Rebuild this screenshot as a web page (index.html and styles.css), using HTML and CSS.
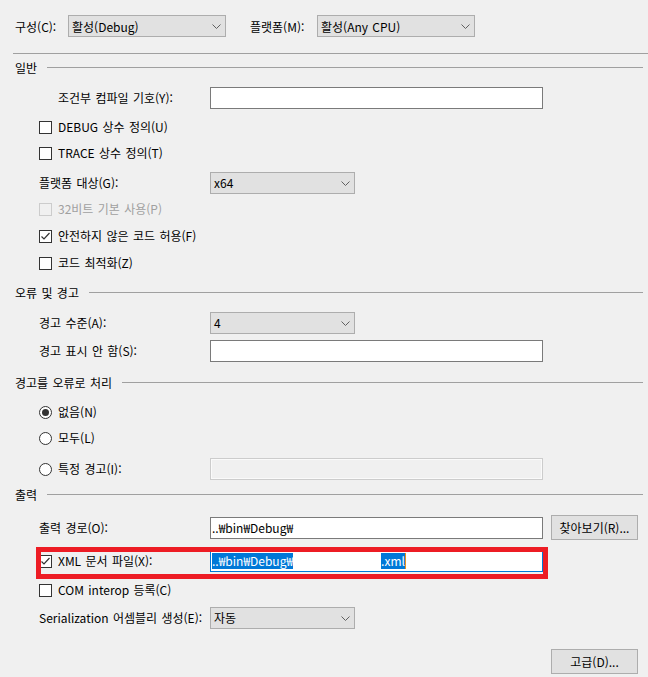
FILE: index.html
```html
<!DOCTYPE html>
<html lang="ko">
<head>
<meta charset="utf-8">
<title>빌드 속성</title>
<link rel="stylesheet" href="styles.css">
</head>
<body>
<div class="page">
  <div class="topbar">
    <span class="lbl-cfg">구성(C):</span>
    <div class="combo w158"><span>활성(Debug)</span><svg class="chev" width="9" height="5" viewBox="0 0 9 5"><polyline points="0.5,0.5 4.5,4.5 8.5,0.5"/></svg></div>
    <span class="lbl-plat">플랫폼(M):</span>
    <div class="combo w158"><span>활성(Any CPU)</span><svg class="chev" width="9" height="5" viewBox="0 0 9 5"><polyline points="0.5,0.5 4.5,4.5 8.5,0.5"/></svg></div>
  </div>
  <div class="sep"></div>

  <div class="heading mt2"><span>일반</span><div class="hline"></div></div>
  <div class="row mt9"><span class="label indent">조건부 컴파일 기호(Y):</span><div class="textbox w333"></div></div>
  <div class="row mt7"><span class="check"></span><span class="ctext">DEBUG 상수 정의(U)</span></div>
  <div class="row mt4"><span class="check"></span><span class="ctext">TRACE 상수 정의(T)</span></div>
  <div class="row mt8"><span class="label">플랫폼 대상(G):</span><div class="combo w145"><span>x64</span><svg class="chev" width="9" height="5" viewBox="0 0 9 5"><polyline points="0.5,0.5 4.5,4.5 8.5,0.5"/></svg></div></div>
  <div class="row mt4 disabled"><span class="check off"></span><span class="ctext">32비트 기본 사용(P)</span></div>
  <div class="row mt5"><span class="check"><svg width="11" height="11" viewBox="0 0 11 11"><polyline points="1.5,5.5 4,8 9.5,2"/></svg></span><span class="ctext">안전하지 않은 코드 허용(F)</span></div>
  <div class="row mt5"><span class="check"></span><span class="ctext">코드 최적화(Z)</span></div>

  <div class="heading mt7"><span>오류 및 경고</span><div class="hline"></div></div>
  <div class="row mt9"><span class="label">경고 수준(A):</span><div class="combo w145"><span>4</span><svg class="chev" width="9" height="5" viewBox="0 0 9 5"><polyline points="0.5,0.5 4.5,4.5 8.5,0.5"/></svg></div></div>
  <div class="row mt6"><span class="label">경고 표시 안 함(S):</span><div class="textbox w333"></div></div>

  <div class="heading mt9"><span>경고를 오류로 처리</span><div class="hline"></div></div>
  <div class="row mt8"><span class="radio on"></span><span class="ctext">없음(N)</span></div>
  <div class="row mt4"><span class="radio"></span><span class="ctext">모두(L)</span></div>
  <div class="row mt9"><span class="radio"></span><span class="ctext rlabel">특정 경고(I):</span><div class="textbox w333 dis"></div></div>

  <div class="heading mt3"><span>출력</span><div class="hline"></div></div>
  <div class="row tall mt10"><span class="label">출력 경로(O):</span><div class="textbox w333"><span class="val">..₩bin₩Debug₩</span></div><div class="button browse">찾아보기(R)...</div></div>
  <div class="row mt10 xmlrow">
    <span class="check"><svg width="11" height="11" viewBox="0 0 11 11"><polyline points="1.5,5.5 4,8 9.5,2"/></svg></span><span class="ctext xlabel">XML 문서 파일(X):</span>
    <div class="textbox w333 focus"><span class="sel">..₩bin₩Debug₩</span><span class="redact"></span><span class="sel">.xml</span><span class="caret"></span></div>
    <div class="redbox"></div>
  </div>
  <div class="row mt7"><span class="check"></span><span class="ctext">COM interop 등록(C)</span></div>
  <div class="row mt6"><span class="label">Serialization 어셈블리 생성(E):</span><div class="combo w145"><span>자동</span><svg class="chev" width="9" height="5" viewBox="0 0 9 5"><polyline points="0.5,0.5 4.5,4.5 8.5,0.5"/></svg></div></div>
  <div class="footer"><div class="button">고급(D)...</div></div>
</div>
</body>
</html>
```

FILE: styles.css
```css
html, body {
  margin: 0;
  padding: 0;
  background: #f0f0f0;
}
body {
  font-family: "Noto Sans CJK KR", "Noto Sans", sans-serif;
  font-size: 12px;
  color: #000;
  width: 648px;
  height: 677px;
  overflow: hidden;
  word-spacing: 1px;
}
.page {
  position: relative;
}
.topbar {
  display: flex;
  align-items: center;
  height: 22px;
  padding-top: 15px;
  padding-left: 15px;
  margin-bottom: 16px;
}
.lbl-cfg { width: 53px; }
.lbl-plat { width: 67px; margin-left: 24px; }
.sep {
  height: 1px;
  margin-left: 13px;
  background: #a0a0a0;
}
.heading {
  display: flex;
  align-items: center;
  height: 22px;
  padding-left: 15px;
  padding-right: 5px;
}
.hline {
  flex: 1;
  height: 1px;
  margin-left: 10px;
  background: #a0a0a0;
}
.row {
  display: flex;
  align-items: center;
  height: 22px;
  padding-left: 39px;
  line-height: 16px;
}
.row.tall { height: 25px; }
.label { flex: 0 0 171px; white-space: nowrap; }
.label.indent { flex-basis: 152px; margin-left: 19px; }
.ctext { margin-left: 6px; white-space: nowrap; }
.rlabel { width: 152px; }
.xlabel { width: 152px; }
.disabled .ctext { color: #a0a0a0; }

.mt2 { margin-top: 2px; }
.mt3 { margin-top: 3px; }
.mt4 { margin-top: 4px; }
.mt5 { margin-top: 5px; }
.mt6 { margin-top: 6px; }
.mt7 { margin-top: 7px; }
.mt8 { margin-top: 8px; }
.mt9 { margin-top: 9px; }
.mt10 { margin-top: 10px; }

.combo {
  box-sizing: border-box;
  height: 22px;
  display: flex;
  align-items: center;
  justify-content: space-between;
  padding: 0 4px 0 3px;
  background: #e1e1e1;
  border: 1px solid #adadad;
}
.w158 { width: 158px; }
.w145 { width: 145px; }
.w333 { width: 333px; }
.chev polyline {
  fill: none;
  stroke: #606060;
  stroke-width: 1;
}
.textbox {
  box-sizing: border-box;
  height: 22px;
  background: #fff;
  border: 1px solid #7a7a7a;
  display: flex;
  align-items: center;
  padding-left: 1px;
  white-space: nowrap;
}
.textbox.dis {
  background: #f0f0f0;
  border-color: #cccccc;
  box-shadow: inset 0 0 0 1px #fafafa;
}
.textbox.focus {
  border-color: #0078d7;
}
.val { line-height: 16px; }
.sel {
  background: #0078d7;
  color: #fff;
  line-height: 16px;
}
.redact {
  display: inline-block;
  width: 88px;
  height: 16px;
  background: #fff;
}
.caret {
  width: 1px;
  height: 16px;
  background: #e8931d;
}
.check {
  box-sizing: border-box;
  flex: 0 0 13px;
  width: 13px;
  height: 13px;
  border: 1px solid #333;
  background: #fff;
  display: flex;
  align-items: center;
  justify-content: center;
}
.check.off {
  border-color: #cccccc;
  background: #f0f0f0;
}
.check svg polyline {
  fill: none;
  stroke: #333;
  stroke-width: 1.2;
}
.radio {
  box-sizing: border-box;
  flex: 0 0 13px;
  width: 13px;
  height: 13px;
  border: 1px solid #333;
  border-radius: 50%;
  background: #fff;
  display: flex;
  align-items: center;
  justify-content: center;
}
.radio.on::after {
  content: "";
  width: 7px;
  height: 7px;
  border-radius: 50%;
  background: #333;
}
.button {
  box-sizing: border-box;
  width: 87px;
  height: 25px;
  display: flex;
  align-items: center;
  justify-content: center;
  background: #e1e1e1;
  border: 1px solid #adadad;
}
.browse { margin-left: 8px; }
.xmlrow { position: relative; }
.redbox {
  position: absolute;
  left: 36px;
  top: -3px;
  width: 512px;
  height: 32px;
  box-sizing: border-box;
  border: 5px solid #ed1c24;
  pointer-events: none;
}
.footer {
  display: flex;
  justify-content: flex-end;
  padding-right: 10px;
  margin-top: 20px;
}
```
